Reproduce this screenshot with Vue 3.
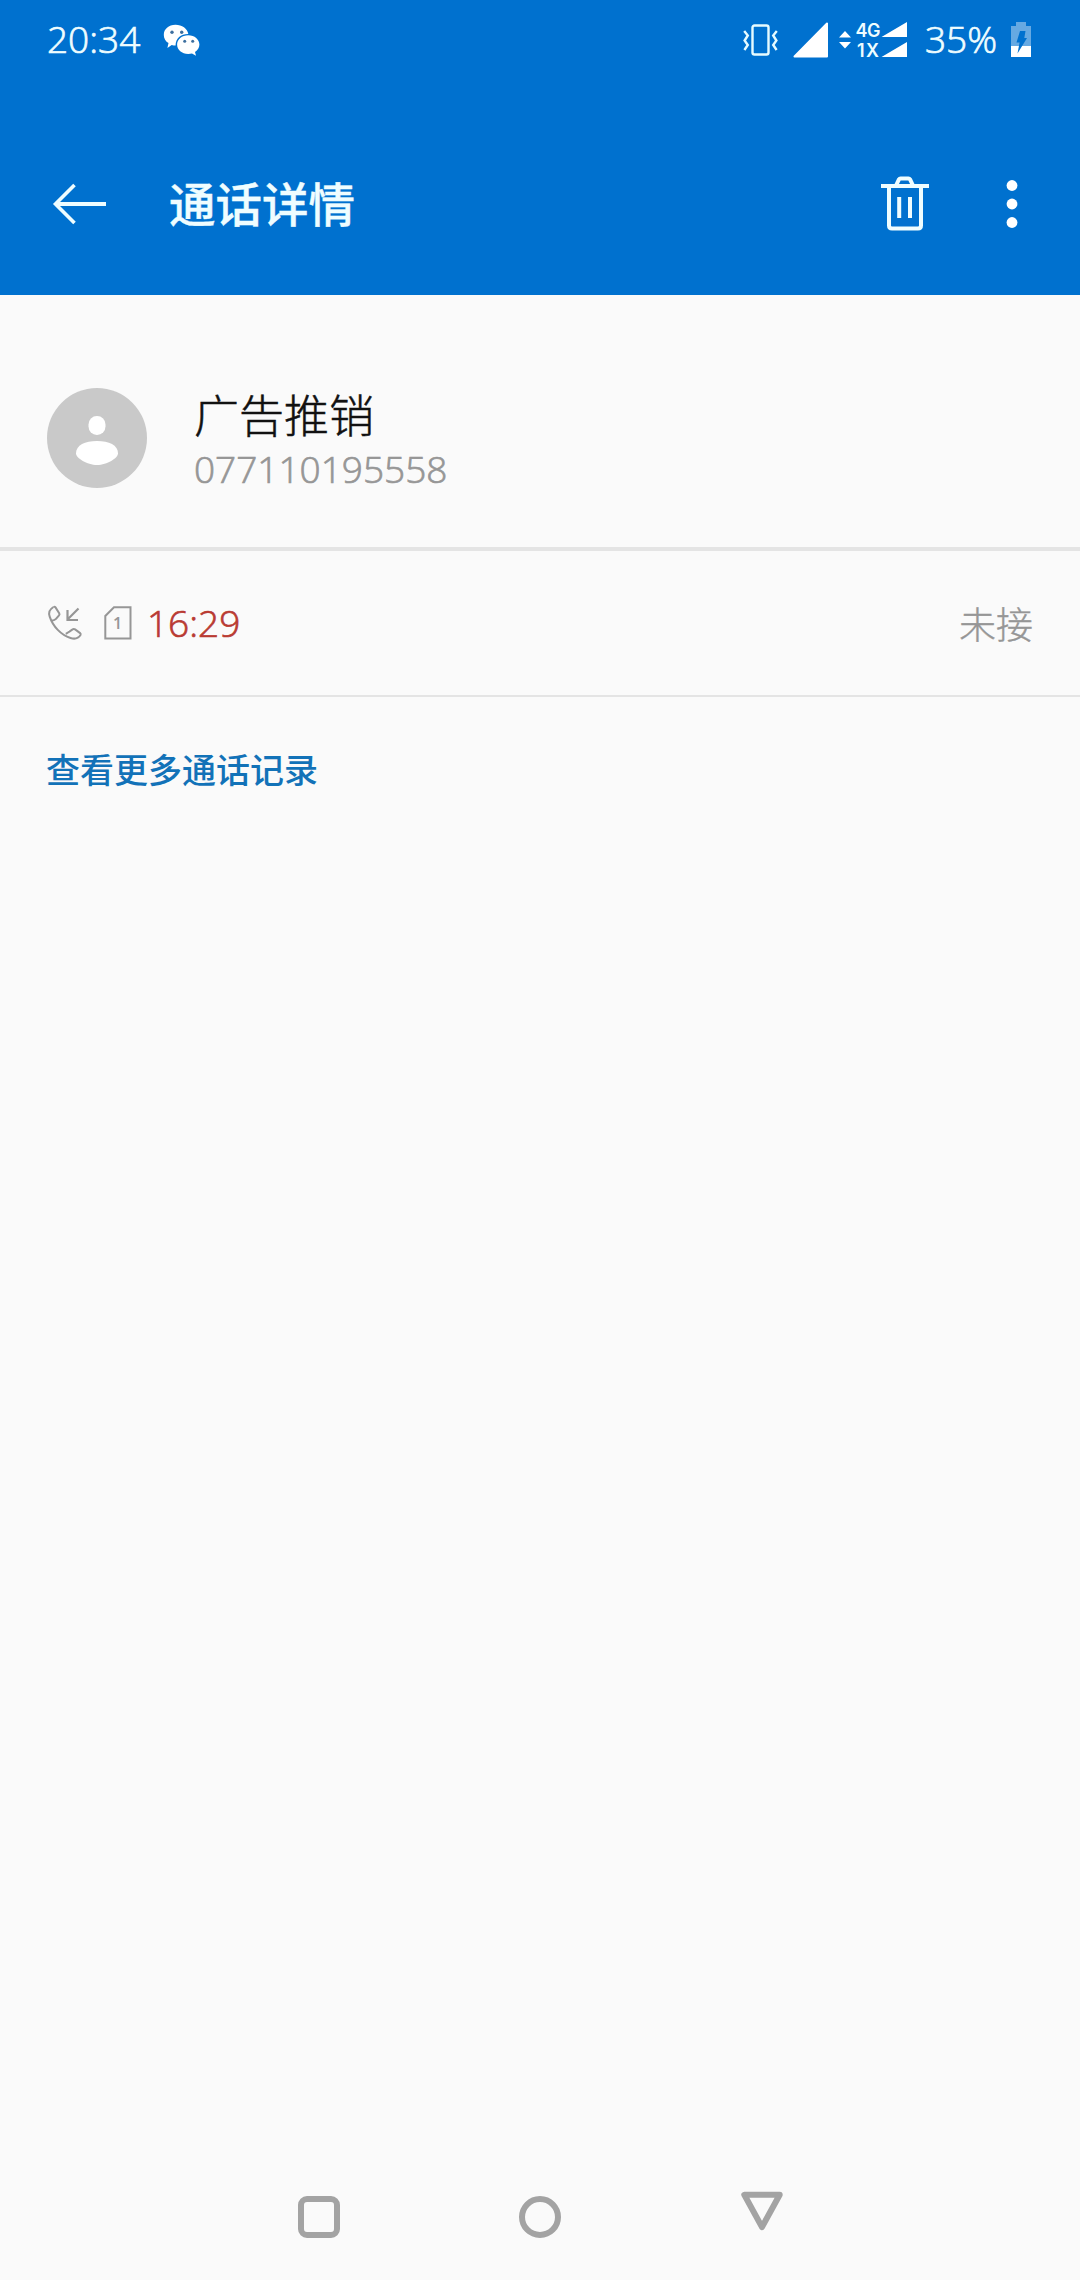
<template>
  <div class="screen">
    <header class="header">
      <div class="status-bar">
        <span class="clock">{{ clock }}</span>
        <svg class="wechat" width="38" height="32" viewBox="0 0 38 32">
          <path
            fill="#fff"
            d="M12.500 .8C5.600.8.8 5.200.8 10.900c0 3.500 1.900 6.400 4.700 8.200L4.400 24l4.300-2.900c1.300.4 2.500.5 3.900.5C12.500 14 18 9.800 25.300 9.900 24.400 4.600 19 .8 12.500.8z"
          />
          <path
            fill="#fff"
            d="M25.300 11.200c-6.500 0-11.200 4.200-11.200 9.400s4.700 9.400 11.200 9.400c1.300 0 2.500-.2 3.700-.5l4 2.300-1-3.700c2.700-1.800 4.400-4.400 4.400-7.500 0-5.200-4.800-9.400-11.100-9.400z"
          />
          <g fill="#3d6f9f">
            <circle cx="9" cy="8.300" r="1.700" />
            <circle cx="18.700" cy="8.300" r="1.700" />
            <circle cx="21.700" cy="17.300" r="1.500" />
            <circle cx="29.700" cy="17.300" r="1.500" />
          </g>
        </svg>

        <div class="status-icons">
          <svg class="vibrate" width="36" height="36" viewBox="0 0 36 36" fill="none" stroke="#e6fbff" stroke-width="2.400">
            <rect x="9.500" y="3.500" width="16" height="29" rx="2" />
            <path d="M1.200 9l3.600 4.500-3.200 5 3.200 4.500-3.400 5" />
            <path d="M33.800 9l-3.600 4.500 3.200 5-3.200 4.500 3.400 5" />
          </svg>
          <svg class="signal" width="36" height="36" viewBox="0 0 36 36">
            <path d="M34 1.500v33H1.500z" fill="#fff" stroke="#fff" stroke-width="2" stroke-linejoin="round" />
          </svg>
          <svg class="network" width="68" height="40" viewBox="0 0 68 40">
            <path d="M6 11l6 6.500H0zM6 28.500l6-6.500H0z" fill="#fff" />
            <text x="16.500" y="17" textLength="25">4G</text>
            <text x="18" y="37" textLength="22">1X</text>
            <path d="M68 2v15H42.500zM68 22v15H42.500z" fill="#fff" />
          </svg>
          <span class="percent">{{ battery }}%</span>
          <svg class="battery" width="20" height="36" viewBox="0 0 20 36">
            <path d="M5 0h10v4h5v20H0V4h5z" fill="#66a9e2" />
            <path d="M0 24h20v11H0z" fill="#fff" />
            <path d="M9 9h5.500l-1.200 7H16L6.500 31.500 8.600 20.500H5.500z" fill="#0071cf" />
          </svg>
        </div>
      </div>

      <div class="toolbar">
        <svg class="back" width="54" height="42" viewBox="0 0 54 42" fill="none" stroke="#effdff">
          <path d="M3 21h50" stroke-width="4" />
          <path d="M21.500 2L2.500 21l19 19" stroke-width="3.600" />
        </svg>
        <h1 class="title">通话详情</h1>
        <svg class="trash" width="48" height="56" viewBox="0 0 48 56" fill="none" stroke="#effdff" stroke-width="4">
          <path d="M0 10h48" />
          <path d="M15 9.500l3-6.200q.5-.8 1.500-.8h8q1 0 1.500.8l3 6.200" />
          <path d="M8 10.500v39q0 3 3 3h26q3 0 3-3v-39" />
          <path d="M18.200 21v21M29 21v21" />
        </svg>
        <svg class="more" width="12" height="50" viewBox="0 0 12 50" fill="#fff">
          <circle cx="6" cy="6.500" r="5.400" />
          <circle cx="6" cy="25" r="5.400" />
          <circle cx="6" cy="43.500" r="5.400" />
        </svg>
      </div>
    </header>

    <section class="contact">
      <svg width="100" height="100" viewBox="0 0 100 100">
        <circle cx="50" cy="50" r="50" fill="#c9c9c9" />
        <rect x="41.500" y="28" width="17" height="19" rx="8.400" fill="#fff" />
        <path d="M29 65.500C29 57 38 53 50 53s21 4 21 12.500C71 70 60 77 50 77s-21-7-21-11.500z" fill="#fff" />
      </svg>
      <div class="contact-text">
        <div class="name">{{ contact.name }}</div>
        <div class="number">{{ contact.number }}</div>
      </div>
    </section>

    <section v-for="call in calls" :key="call.time" class="call">
      <svg class="phone" width="34" height="34" viewBox="0 0 34 34" fill="none" stroke="#969696" stroke-width="2">
        <path d="M5.500 1C2 3 .4 6.800 1.700 10.600 5 20.500 13 29 22.500 32c3.800 1.200 7.800.5 10-3 .4-.8.300-1.300-.4-1.900l-5-3.700c-.9-.6-1.700-.6-2.500 0l-3.200 2.200c-1 .6-1.900 1.300-3.600 2.200" />
        <path d="M5.500 1c.9-.5 1.500-.3 2 .4l3.700 5.800c.5.800.400 1.500-.2 2.200L8 12.800c-.8.900-2.500 1.500-4.500 1.900" />
        <path d="M30.500 2.500L20 13M19.500 4v10h10.500" stroke-width="2.200" />
      </svg>
      <svg class="sim" width="28" height="34" viewBox="0 0 28 34">
        <path d="M10 1.200h16.500v31.300H1.300V10z" fill="none" stroke="#969696" stroke-width="2" />
        <text x="13.500" y="22.500" text-anchor="middle">{{ call.sim }}</text>
      </svg>
      <span class="time">{{ call.time }}</span>
      <span class="state">{{ call.state }}</span>
    </section>

    <a class="history">查看更多通话记录</a>

    <nav class="nav-bar">
      <svg width="42" height="42" viewBox="0 0 42 42">
        <rect x="3" y="3" width="36" height="36" rx="6" />
      </svg>
      <svg width="42" height="42" viewBox="0 0 42 42">
        <circle cx="21" cy="21" r="18" />
      </svg>
      <svg width="42" height="42" viewBox="0 0 42 42">
        <path d="M4.300-1.200h35.400L22 31z" stroke-linejoin="round" />
      </svg>
    </nav>
  </div>
</template>

<script setup>
import { ref } from 'vue';

const clock = ref('20:34');
const battery = ref(35);

const contact = ref({
  name: '广告推销',
  number: '077110195558',
});

const calls = ref([{ sim: 1, time: '16:29', state: '未接' }]);
</script>

<style>
body {
  margin: 0;
  background-color: #fafafa;
}
</style>

<style scoped>
.screen {
  display: flex;
  flex-direction: column;
  width: 1080px;
  height: 2280px;
  background-color: #fafafa;
  font-family: "Noto Sans CJK SC", sans-serif;
  font-weight: 300;
}

svg {
  display: block;
  flex: none;
  overflow: visible;
}

.header {
  height: 295px;
  background-color: #0071cf;
  color: #effdff;
}

.status-bar {
  display: flex;
  align-items: center;
  height: 80px;
  padding: 0 49px 0 47px;
  box-sizing: border-box;
}

.clock,
.percent,
.number,
.time {
  font-family: "Open Sans", sans-serif;
  font-size: 37px;
  -webkit-text-stroke-width: 0.7px;
}

.clock,
.percent {
  padding-bottom: 3px;
}

.wechat {
  margin-left: 23px;
}

.status-icons {
  display: flex;
  align-items: center;
  margin-left: auto;
}

.signal {
  margin-left: 14px;
}

.network {
  margin-left: 10px;
}

.network text {
  font-family: Inter, sans-serif;
  font-size: 18px;
  font-weight: 600;
  fill: #effdff;
}

.percent {
  margin-left: 18px;
}

.battery {
  margin-left: 14px;
}

.toolbar {
  display: flex;
  align-items: center;
  height: 215px;
  padding: 32px 62px 0 53px;
  box-sizing: border-box;
}

.title {
  margin: 0 auto 0 62px;
  padding-bottom: 3px;
  font-size: 46.5px;
  font-weight: 500;
  line-height: 60px;
  -webkit-text-stroke-width: 0.4px;
}

.more {
  margin-left: 77px;
}

.contact {
  display: flex;
  height: 256px;
  padding: 93px 47px 0;
  box-sizing: border-box;
  border-bottom: 4px solid #e4e4e4;
}

.contact-text {
  margin: -2px 0 0 47px;
}

.name {
  font-size: 45px;
  line-height: 56px;
  color: #111;
  -webkit-text-stroke-width: 0.5px;
}

.number {
  line-height: 54px;
  color: #969696;
}

.call {
  display: flex;
  align-items: center;
  height: 146px;
  padding: 0 47px 0 48px;
  box-sizing: border-box;
  border-bottom: 2px solid #e4e4e4;
}

.sim {
  margin-left: 22px;
}

.sim text {
  font-family: "Open Sans", sans-serif;
  font-size: 16px;
  font-weight: 600;
  fill: #969696;
}

.time {
  margin-left: 15px;
  padding-bottom: 1px;
  color: #b93a32;
}

.state {
  margin-left: auto;
  font-size: 37px;
  color: #969696;
  -webkit-text-stroke-width: 0.4px;
}

.history {
  padding: 47px 46px;
  font-size: 34px;
  font-weight: 500;
  line-height: 50px;
  color: #1272b8;
}

.nav-bar {
  display: flex;
  justify-content: center;
  gap: 179px;
  margin-top: auto;
  padding-bottom: 42px;
}

.nav-bar svg {
  fill: none;
  stroke: #a3a3a3;
  stroke-width: 6;
}
</style>
